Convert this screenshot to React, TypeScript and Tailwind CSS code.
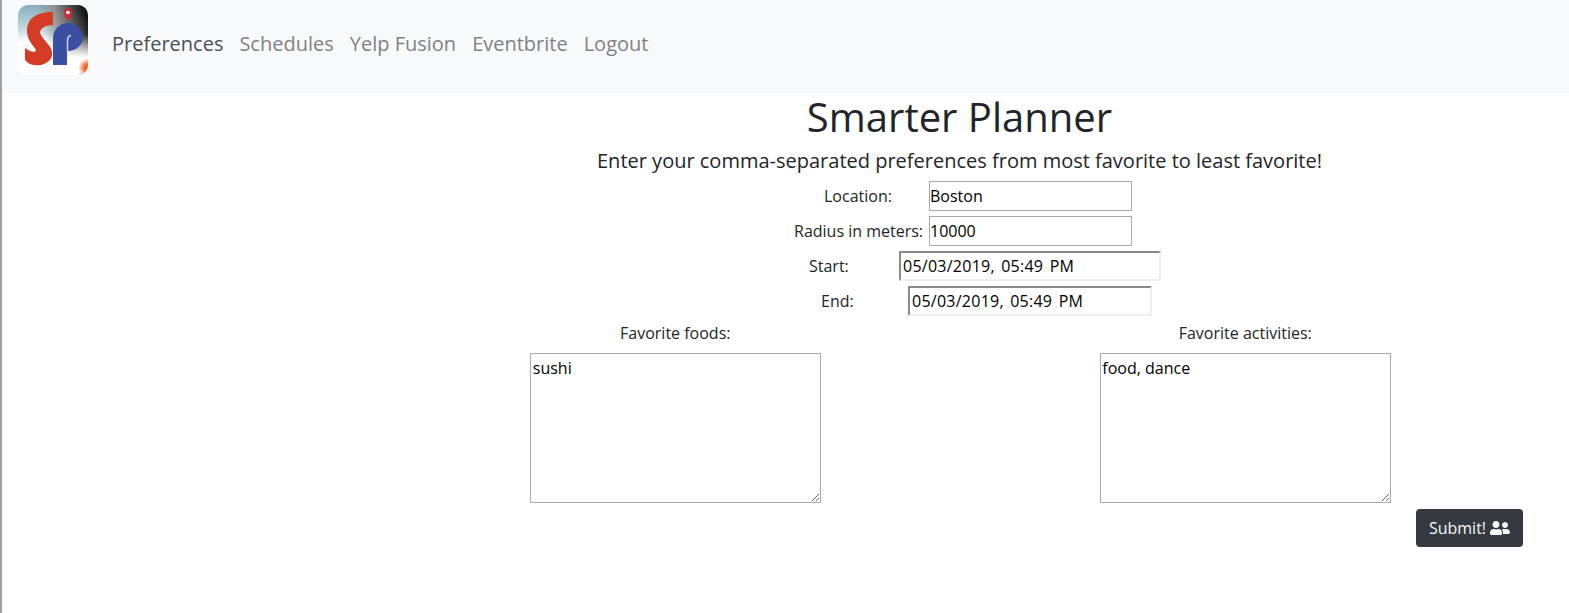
import { FaUserFriends } from 'react-icons/fa';

const NAV_LINKS = ['Schedules', 'Yelp Fusion', 'Eventbrite', 'Logout'];

function Logo() {
  return (
    <svg width="70" height="70" viewBox="0 0 70 70" className="block shrink-0">
      <defs>
        <linearGradient id="bgLeft" x1="0" y1="0" x2="0" y2="1">
          <stop offset="0" stopColor="#86afc0" />
          <stop offset="0.3" stopColor="#bcd3dc" />
          <stop offset="0.55" stopColor="#ffffff" />
        </linearGradient>
        <linearGradient id="bgRight" x1="0.25" y1="0.35" x2="1" y2="0.1">
          <stop offset="0.1" stopColor="#9a9a9a" stopOpacity="0" />
          <stop offset="0.45" stopColor="#8f8f8f" />
          <stop offset="1" stopColor="#0a0a0a" />
        </linearGradient>
        <linearGradient id="bgFade" x1="0" y1="0" x2="0" y2="1">
          <stop offset="0.42" stopColor="#ffffff" stopOpacity="0" />
          <stop offset="0.75" stopColor="#ffffff" />
        </linearGradient>
        <radialGradient id="flame" cx="1" cy="0.9" r="0.14">
          <stop offset="0.35" stopColor="#f0662a" />
          <stop offset="1" stopColor="#f0662a" stopOpacity="0" />
        </radialGradient>
      </defs>
      <rect width="70" height="70" rx="10" fill="url(#bgLeft)" />
      <rect width="70" height="70" rx="10" fill="url(#bgRight)" />
      <rect width="70" height="70" rx="10" fill="url(#bgFade)" />
      <rect width="70" height="70" rx="10" fill="url(#flame)" />
      <path
        d="M35 7 C19 7 9 13 9 26 C9 34 14 39 18 45 C18 48 12 47 7 43 L7 55 C11 60 18 61 23 60 C31 58 35 53 34 47 C33 40 25 35 22 28 C22 23 28 20 35 20 Z"
        fill="#d43c25"
      />
      <path
        d="M35 60 L35 34 C35 24 42 18 50 18 C58 18 65 24 65 32 C65 40 58 46 50 46 L49 46 L49 60 Z"
        fill="#3a4fa3"
      />
      <path d="M49.5 46 L49.5 36 C49.5 32 51 30.5 53 30.5" stroke="#cfd3d8" strokeWidth="1.5" fill="none" />
      <path d="M50 16 C47.5 12.5 46 10.5 46 8 C46 5 47.8 3 50 3 C52.2 3 54 5 54 8 C54 10.5 52.5 12.5 50 16 Z" fill="#cc2b36" />
      <circle cx="50" cy="7.5" r="1.8" fill="#ffffff" />
    </svg>
  );
}

function Row({ label, value, className, labelClass, inputClass }: { label: string; value: string; className: string; labelClass: string; inputClass: string }) {
  return (
    <div className={`flex items-center ${className}`}>
      <label className={`text-[16px] text-[#212529] ${labelClass}`}>{label}</label>
      <input readOnly value={value} className={`h-[30px] text-[16px] text-black outline-none ${inputClass}`} />
    </div>
  );
}

export default function App() {
  const plain = 'w-[203px] border border-[#a9a9a9] px-0';
  const date = 'border-2 border-t-[#8a8a8a] border-l-[#8a8a8a] border-r-[#eeeeee] border-b-[#eeeeee] px-[2px] tracking-[0.25px] [word-spacing:2px]';

  return (
    <div className="h-[613px] overflow-hidden border-l-2 border-[#a0a0a0] bg-white font-['Open_Sans',sans-serif]">
      <nav className="flex h-[93px] items-start bg-[#f8f9fa] pl-4 pt-[5px]">
        <Logo />
        <div className="ml-6 flex h-[78px] items-center gap-4 text-[20px]">
          <a className="text-[#495057]">Preferences</a>
          {NAV_LINKS.map((link) => (
            <a key={link} className="text-[#7f8285]">
              {link}
            </a>
          ))}
        </div>
      </nav>

      <main className="ml-[348px] flex flex-col">
        <h1 className="mt-[-6px] text-center text-[40px] leading-[60px] text-[#212529]">Smarter Planner</h1>
        <p className="text-center text-[20px] leading-[28px] text-[#212529]">
          Enter your comma-separated preferences from most favorite to least favorite!
        </p>

        <div className="mt-[6px] flex flex-col gap-[5px]">
          <Row label="Location:" value="Boston" className="ml-[474px]" labelClass="w-[105px]" inputClass={plain} />
          <Row label="Radius in meters:" value="10000" className="ml-[444px]" labelClass="w-[135px]" inputClass={plain} />
          <Row label="Start:" value="05/03/2019, 05:49 PM" className="ml-[459px]" labelClass="w-[90px]" inputClass={`w-[262px] ${date}`} />
          <Row label="End:" value="05/03/2019, 05:49 PM" className="ml-[471px]" labelClass="w-[87px]" inputClass={`w-[244px] ${date}`} />
        </div>

        <div className="ml-[41px] mt-[6px] grid w-[1139px] grid-cols-2">
          <div className="flex flex-col items-center">
            <label className="pr-[1px] text-[16px] leading-[22px] text-[#212529]">Favorite foods:</label>
            <textarea readOnly value="sushi" className="mt-[9px] h-[150px] w-[291px] border border-[#a9a9a9] px-[1.5px] pt-[3px] text-[16px] leading-[22px] text-black outline-none" />
          </div>
          <div className="flex flex-col items-center">
            <label className="text-[16px] leading-[22px] text-[#212529]">Favorite activities:</label>
            <textarea readOnly value="food, dance" className="mt-[9px] h-[150px] w-[291px] border border-[#a9a9a9] px-[1.5px] pt-[3px] text-[16px] leading-[22px] text-black outline-none" />
          </div>
        </div>

        <div className="mt-[6px] flex w-[1173px] justify-end">
          <button className="flex h-[38px] w-[107px] items-center justify-center gap-[4px] rounded-[4px] bg-[#343a40] text-[16px] text-[#f8f9fa]">
            Submit!
            <FaUserFriends className="h-[16px] w-[20px]" />
          </button>
        </div>
      </main>
    </div>
  );
}
